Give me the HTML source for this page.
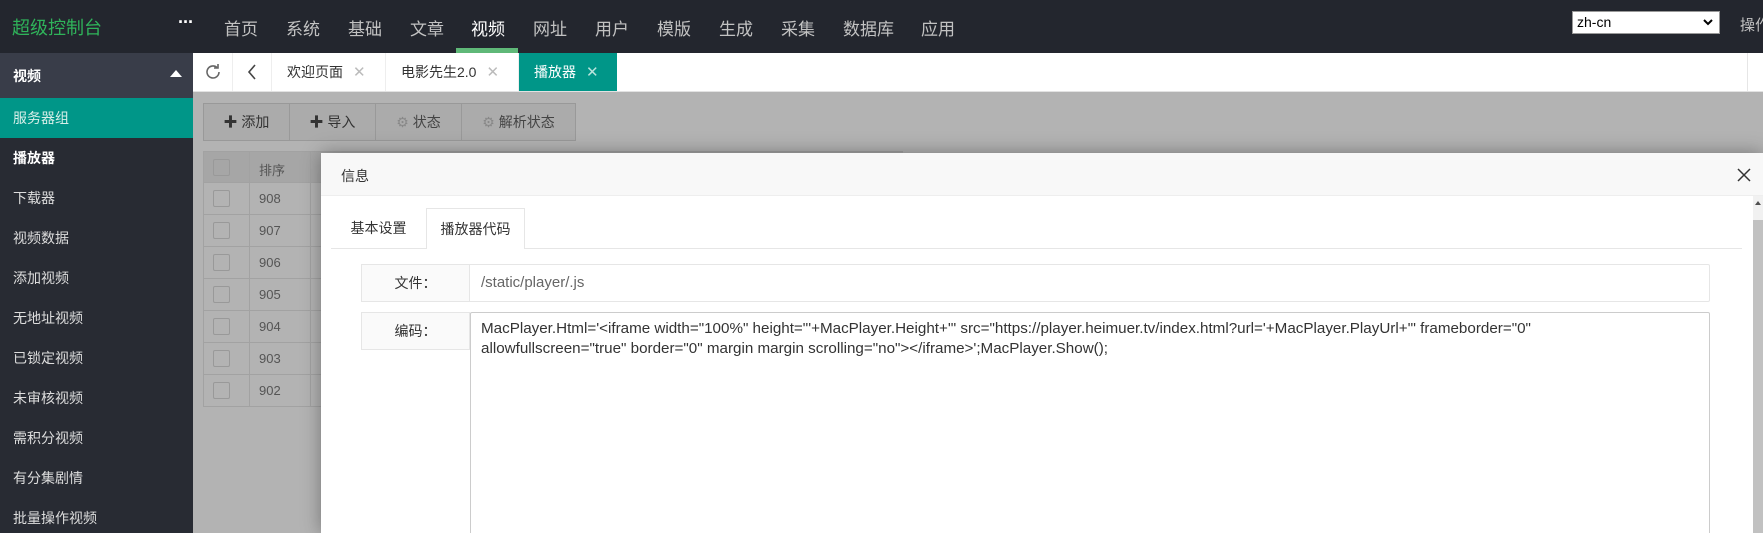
<!DOCTYPE html>
<html><head><meta charset="utf-8"><style>
*{margin:0;padding:0;box-sizing:border-box}
html,body{width:1763px;height:533px;overflow:hidden}
body{position:relative;background:#b3b3b3;font-family:"Liberation Sans","Noto Sans CJK SC",sans-serif;font-size:14px;color:#333}
.abs{position:absolute}
#top{left:0;top:0;width:1763px;height:53px;background:#23262e}
#logo{left:12px;top:14px;color:#2fb35a;font-size:18px}
.nav{top:15px;color:#c2c2c2;font-size:17px}
#side{left:0;top:53px;width:193px;height:480px;background:#282b33}
.si{position:absolute;left:13px;color:#fff;font-size:14px}
#tabs{left:193px;top:53px;width:1570px;height:39px;background:#fff;border-bottom:1px solid #e2e2e2}
.tb{position:absolute;top:0;height:38px;border-right:1px solid #eee;font-size:14px;line-height:38px;color:#333}
.x{color:#bbb;margin-left:10px;font-size:15px}
.btn{position:absolute;top:103px;height:38px;border:1px solid #999;background:#ababab;color:#333;line-height:36px;text-align:center;font-size:14px}
.tr{position:absolute;left:203px;width:700px;height:32px;border-bottom:1px solid #a2a2a2;color:#555;font-size:13px}
.cb{position:absolute;left:10px;top:7px;width:17px;height:17px;border:1px solid #999;border-radius:2px}
.num{position:absolute;left:56px;top:8px}
.vl{position:absolute;top:0;height:32px;width:1px;background:#a2a2a2}
</style></head><body>
<div id="top" class="abs"></div>
<div id="logo" class="abs">超级控制台</div>
<div class="abs" style="left:178px;top:12px;color:#fff;font-size:18px;font-weight:bold;letter-spacing:-1px">···</div>
<div class="nav abs" style="left:224px">首页</div>
<div class="nav abs" style="left:286px">系统</div>
<div class="nav abs" style="left:348px">基础</div>
<div class="nav abs" style="left:410px">文章</div>
<div class="nav abs" style="left:471px;color:#fff">视频</div>
<div class="abs" style="left:456px;top:48px;width:62px;height:5px;background:#5fb878"></div>
<div class="nav abs" style="left:533px">网址</div>
<div class="nav abs" style="left:595px">用户</div>
<div class="nav abs" style="left:657px">模版</div>
<div class="nav abs" style="left:719px">生成</div>
<div class="nav abs" style="left:781px">采集</div>
<div class="nav abs" style="left:843px">数据库</div>
<div class="nav abs" style="left:921px">应用</div>
<div class="abs" style="left:1572px;top:11px;width:148px;height:23px;background:#fff;border:1px solid #999;font-size:14px;line-height:21px;padding-left:4px;color:#000">zh-cn<svg style="position:absolute;right:6px;top:7px" width="10" height="7" viewBox="0 0 10 7"><path d="M1 1l4 4 4-4" fill="none" stroke="#000" stroke-width="2"/></svg></div>
<div class="abs" style="left:1740px;top:14px;color:#c2c2c2;font-size:15px;white-space:nowrap">操作</div>

<div id="side" class="abs">
<div class="abs" style="left:0;top:0;width:193px;height:45px;background:#393d49"></div>
<div class="si" style="top:13px;font-weight:bold">视频</div>
<div class="abs" style="left:170px;top:17px;width:0;height:0;border-left:6px solid transparent;border-right:6px solid transparent;border-bottom:7px solid #fff"></div>
<div class="abs" style="left:0;top:45px;width:193px;height:40px;background:#009688"></div>
<div class="si" style="top:55px;color:#d8efe9">服务器组</div>
<div class="si" style="top:95px;font-weight:bold">播放器</div>
<div class="si" style="top:135px;color:#ddd">下载器</div>
<div class="si" style="top:175px;color:#ddd">视频数据</div>
<div class="si" style="top:215px;color:#ddd">添加视频</div>
<div class="si" style="top:255px;color:#ddd">无地址视频</div>
<div class="si" style="top:295px;color:#ddd">已锁定视频</div>
<div class="si" style="top:335px;color:#ddd">未审核视频</div>
<div class="si" style="top:375px;color:#ddd">需积分视频</div>
<div class="si" style="top:415px;color:#ddd">有分集剧情</div>
<div class="si" style="top:455px;color:#ddd">批量操作视频</div>
</div>

<div id="tabs" class="abs">
<div class="tb" style="left:0;width:40px;text-align:center"><svg width="20" height="20" viewBox="0 0 20 20" style="margin-top:9px"><path d="M16 10a6 6 0 1 1-2-4.5" fill="none" stroke="#666" stroke-width="1.6"/><path d="M15 2v4h-4" fill="none" stroke="#666" stroke-width="1.6"/></svg></div>
<div class="tb" style="left:40px;width:39px;text-align:center"><svg width="12" height="16" viewBox="0 0 12 16" style="margin-top:11px"><path d="M9 1L3 8l6 7" fill="none" stroke="#444" stroke-width="1.6"/></svg></div>
<div class="tb" style="left:79px;width:114px;padding-left:15px">欢迎页面<span class="x">✕</span></div>
<div class="tb" style="left:193px;width:133px;padding-left:15px">电影先生2.0<span class="x">✕</span></div>
<div class="tb" style="left:326px;width:98px;background:#009688;color:#fff;padding-left:15px;border:none">播放器<span class="x" style="color:#b9e3dc">✕</span></div>
<div class="abs" style="left:1554px;top:0;width:1px;height:38px;background:#e6e6e6"></div>
</div>

<div class="btn" style="left:203px;width:87px">✚ 添加</div>
<div class="btn" style="left:289px;width:87px">✚ 导入</div>
<div class="btn" style="left:375px;width:87px;color:#444"><span style="color:#888">⚙</span> 状态</div>
<div class="btn" style="left:461px;width:115px;color:#444"><span style="color:#888">⚙</span> 解析状态</div>

<div class="tr" style="top:151px;background:#a6a6a6;border-top:1px solid #a2a2a2"><div class="cb"></div><div class="vl" style="left:46px"></div><div class="num" style="left:56px">排序</div><div class="vl" style="left:107px"></div></div>
<div class="tr" style="top:183px"><div class="cb"></div><div class="vl" style="left:46px"></div><div class="num">908</div><div class="vl" style="left:107px"></div></div>
<div class="tr" style="top:215px"><div class="cb"></div><div class="vl" style="left:46px"></div><div class="num">907</div><div class="vl" style="left:107px"></div></div>
<div class="tr" style="top:247px"><div class="cb"></div><div class="vl" style="left:46px"></div><div class="num">906</div><div class="vl" style="left:107px"></div></div>
<div class="tr" style="top:279px"><div class="cb"></div><div class="vl" style="left:46px"></div><div class="num">905</div><div class="vl" style="left:107px"></div></div>
<div class="tr" style="top:311px"><div class="cb"></div><div class="vl" style="left:46px"></div><div class="num">904</div><div class="vl" style="left:107px"></div></div>
<div class="tr" style="top:343px"><div class="cb"></div><div class="vl" style="left:46px"></div><div class="num">903</div><div class="vl" style="left:107px"></div></div>
<div class="tr" style="top:375px"><div class="cb"></div><div class="vl" style="left:46px"></div><div class="num">902</div><div class="vl" style="left:107px"></div></div>
<div class="abs" style="left:203px;top:151px;width:1px;height:256px;background:#a2a2a2"></div>

<div class="abs" style="left:321px;top:153px;width:1442px;height:380px;background:#fff;box-shadow:0 0 18px rgba(0,0,0,.35);overflow:hidden">
<div class="abs" style="left:0;top:0;width:1442px;height:43px;background:#f8f8f8;border-bottom:1px solid #eee"></div>
<div class="abs" style="left:20px;top:13px;font-size:14px">信息</div>
<svg class="abs" style="left:1416px;top:15px" width="14" height="14" viewBox="0 0 14 14"><path d="M1 1l12 12M13 1L1 13" stroke="#333" stroke-width="1.5"/></svg>
<div class="abs" style="left:10px;top:95px;width:1411px;height:1px;background:#e6e6e6"></div>
<div class="abs" style="left:10px;top:55px;width:95px;height:40px;line-height:40px;text-align:center;font-size:14px">基本设置</div>
<div class="abs" style="left:105px;top:55px;width:99px;height:41px;line-height:40px;text-align:center;font-size:14px;background:#fff;border:1px solid #e6e6e6;border-bottom:none">播放器代码</div>
<div class="abs" style="left:40px;top:111px;width:1349px;height:38px;border:1px solid #e6e6e6;border-radius:2px"></div>
<div class="abs" style="left:40px;top:111px;width:109px;height:38px;background:#fafafa;border:1px solid #e6e6e6;line-height:36px;text-align:center">文件：</div>
<div class="abs" style="left:160px;top:121px;color:#666;font-size:15px">/static/player/.js</div>
<div class="abs" style="left:40px;top:159px;width:109px;height:38px;background:#fafafa;border:1px solid #e6e6e6;line-height:36px;text-align:center">编码：</div>
<div class="abs" style="left:149px;top:159px;width:1240px;height:240px;border:1px solid #ccc;border-radius:2px"></div>
<div class="abs" style="left:160px;top:166px;font-size:15.2px;line-height:20px;white-space:nowrap;color:#333">MacPlayer.Html='&lt;iframe width="100%" height="'+MacPlayer.Height+'" src="https://player.heimuer.tv/index.html?url='+MacPlayer.PlayUrl+'" frameborder="0"<br>allowfullscreen="true" border="0" margin margin scrolling="no"&gt;&lt;/iframe&gt;';MacPlayer.Show();</div>
<div class="abs" style="left:1432px;top:43px;width:10px;height:337px;background:#f1f1f1"></div>
<div class="abs" style="left:1432px;top:67px;width:10px;height:313px;background:#c1c1c1"></div>
<div class="abs" style="left:1434px;top:48px;width:0;height:0;border-left:3px solid transparent;border-right:3px solid transparent;border-bottom:4px solid #505050"></div>
</div>
</body></html>
